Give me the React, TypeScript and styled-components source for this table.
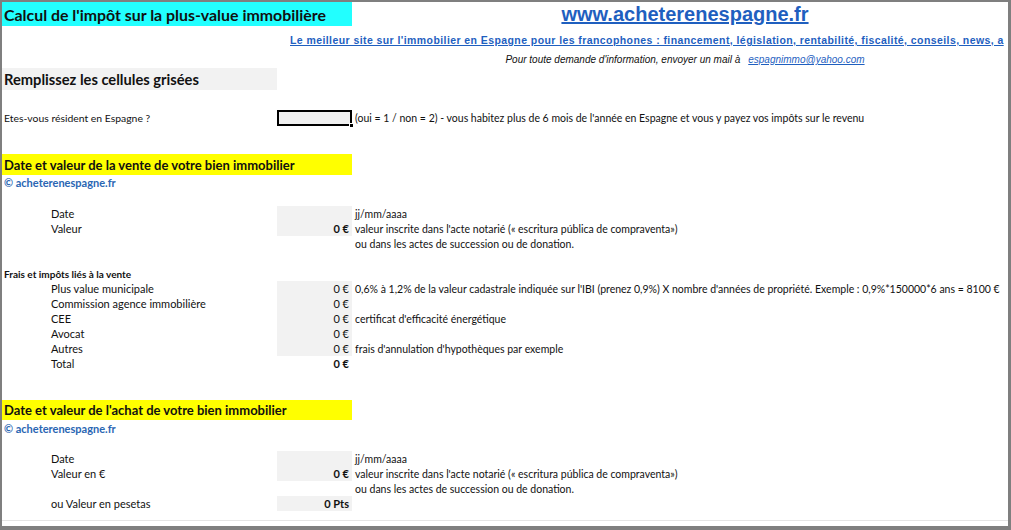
import React from 'react';
import styled, { createGlobalStyle } from 'styled-components';

const GlobalStyle = createGlobalStyle`
  html, body { margin: 0; padding: 0; background: #fff; }
  body { font-family: Lato, "Open Sans", sans-serif; color: #111; }
  * { box-sizing: border-box; }
`;

const Frame = styled.div`
  width: 1011px;
  height: 530px;
  border-style: solid;
  border-color: #7f7f7f;
  border-width: 2px 3px 4px 2px;
  overflow: hidden;
  background: #fff;
  display: flex;
  flex-direction: column;
`;

const Row = styled.div<{ $h: number; $line?: boolean }>`
  height: ${(p) => p.$h}px;
  flex: none;
  display: grid;
  grid-template-columns: 47px 228px 75px 656px;
  align-items: stretch;
  ${(p) => (p.$line ? 'border-bottom: 1px solid #e4e4e4;' : '')}
`;

const Spacer = styled.div<{ $h: number }>`
  height: ${(p) => p.$h}px;
  flex: none;
`;

const TitleBand = styled.div`
  grid-column: 1 / 4;
  background: #22ffff;
  display: flex;
  align-items: center;
  padding-left: 2px;
  font-weight: 700;
  font-size: 15.9px;
  white-space: nowrap;
`;

const SiteLink = styled.a`
  grid-column: 4;
  display: flex;
  align-items: center;
  justify-content: center;
  padding-left: 10px;
  font-family: "Liberation Sans", Arial, sans-serif;
  font-weight: 700;
  font-size: 20px;
  color: #1f5fbf;
  text-decoration: underline;
  white-space: nowrap;
`;

const Tagline = styled.a`
  grid-column: 3 / 5;
  display: flex;
  align-items: center;
  padding-left: 13px;
  font-family: "Liberation Sans", Arial, sans-serif;
  font-weight: 700;
  font-size: 10.5px;
  letter-spacing: 0.42px;
  color: #1f5fbf;
  text-decoration: underline;
  white-space: nowrap;
  overflow: visible;
`;

const Contact = styled.div`
  grid-column: 4;
  display: flex;
  align-items: center;
  justify-content: center;
  padding-left: 10px;
  font-family: "Liberation Sans", Arial, sans-serif;
  font-style: italic;
  font-size: 10px;
  white-space: nowrap;
  gap: 8px;
`;

const Mail = styled.a`
  color: #1f5fbf;
  text-decoration: underline;
`;

const SectionBand = styled.div<{ $bg: string; $span: number }>`
  grid-column: 1 / ${(p) => p.$span};
  background: ${(p) => p.$bg};
  display: flex;
  align-items: center;
  padding-left: 2px;
  font-weight: 700;
  font-size: ${(p) => (p.$span === 3 ? '14.7px' : '13px')};
  white-space: nowrap;
`;

const Copyright = styled.div`
  grid-column: 1 / 3;
  display: flex;
  align-items: center;
  padding-left: 2px;
  font-size: 11px;
  font-weight: 700;
  color: #2a66b3;
  white-space: nowrap;
`;

const SubHeading = styled.div`
  grid-column: 1 / 3;
  display: flex;
  align-items: center;
  padding-left: 2px;
  font-size: 10px;
  font-weight: 700;
  white-space: nowrap;
`;

const Question = styled.div`
  grid-column: 1 / 3;
  display: flex;
  align-items: center;
  padding-left: 2px;
  font-size: 10.4px;
  white-space: nowrap;
`;

const Label = styled.div`
  grid-column: 2;
  display: flex;
  align-items: center;
  padding-left: 2px;
  font-size: 11px;
  white-space: nowrap;
`;

const InputCell = styled.div<{ $filled?: boolean; $bold?: boolean }>`
  grid-column: 3;
  display: flex;
  align-items: center;
  justify-content: flex-end;
  padding-right: 3px;
  background: ${(p) => (p.$filled ? '#f2f2f2' : 'transparent')};
  font-size: 11px;
  font-weight: ${(p) => (p.$bold ? 700 : 400)};
  white-space: nowrap;
`;

const ActiveInput = styled.div`
  grid-column: 3;
  position: relative;
  background: #f0f0f0;
  border: 2px solid #000;
`;

const Handle = styled.span`
  position: absolute;
  right: -4px;
  bottom: -4px;
  width: 5px;
  height: 5px;
  background: #000;
  border: 1px solid #fff;
`;

const Note = styled.div`
  grid-column: 4;
  display: flex;
  align-items: center;
  padding-left: 3px;
  font-size: 10.5px;
  white-space: nowrap;
`;

type Item = { label?: string; value?: string; filled?: boolean; bold?: boolean; note?: string };

const venteMain: Item[] = [
  { label: 'Date', filled: true, note: 'jj/mm/aaaa' },
  { label: 'Valeur', value: '0 €', filled: true, bold: true, note: "valeur inscrite dans l'acte notarié (« escritura pública de compraventa»)" },
  { note: 'ou dans les actes de succession ou de donation.' },
];

const frais: Item[] = [
  { label: 'Plus value municipale', value: '0 €', filled: true, note: "0,6% à 1,2% de la valeur cadastrale indiquée sur l'IBI (prenez 0,9%) X nombre d'années de propriété. Exemple : 0,9%*150000*6 ans = 8100 €" },
  { label: 'Commission agence immobilière', value: '0 €', filled: true },
  { label: 'CEE', value: '0 €', filled: true, note: "certificat d'efficacité énergétique" },
  { label: 'Avocat', value: '0 €', filled: true },
  { label: 'Autres', value: '0 €', filled: true, note: "frais d'annulation d'hypothèques par exemple" },
  { label: 'Total', value: '0 €', bold: true },
];

const achat: Item[] = [
  { label: 'Date', filled: true, note: 'jj/mm/aaaa' },
  { label: 'Valeur en €', value: '0 €', filled: true, bold: true, note: "valeur inscrite dans l'acte notarié (« escritura pública de compraventa»)" },
  { note: 'ou dans les actes de succession ou de donation.' },
  { label: 'ou Valeur en pesetas', value: '0 Pts', filled: true, bold: true },
];

const DataRows = ({ items }: { items: Item[] }) => (
  <>
    {items.map((it, i) => (
      <Row $h={15} key={i}>
        <Label>{it.label}</Label>
        <InputCell $filled={it.filled} $bold={it.bold}>{it.value}</InputCell>
        <Note>{it.note}</Note>
      </Row>
    ))}
  </>
);

export default function App() {
  return (
    <>
      <GlobalStyle />
      <Frame>
        <Row $h={24}>
          <TitleBand>Calcul de l'impôt sur la plus-value immobilière</TitleBand>
          <SiteLink href="#">www.acheterenespagne.fr</SiteLink>
        </Row>
        <Row $h={28}>
          <Tagline href="#">
            Le meilleur site sur l'immobilier en Espagne pour les francophones : financement, législation, rentabilité, fiscalité, conseils, news, a
          </Tagline>
        </Row>
        <Row $h={10}>
          <Contact>
            <span>Pour toute demande d'information, envoyer un mail à</span>
            <Mail href="#">espagnimmo@yahoo.com</Mail>
          </Contact>
        </Row>
        <Spacer $h={4} />
        <Row $h={22}>
          <SectionBand $bg="#f2f2f2" $span={3}>Remplissez les cellules grisées</SectionBand>
        </Row>
        <Spacer $h={20} />
        <Row $h={16}>
          <Question>Etes-vous résident en Espagne ?</Question>
          <ActiveInput>
            <Handle />
          </ActiveInput>
          <Note>(oui = 1 / non = 2) - vous habitez plus de 6 mois de l'année en Espagne et vous y payez vos impôts sur le revenu</Note>
        </Row>
        <Spacer $h={28} />
        <Row $h={21}>
          <SectionBand $bg="#ffff00" $span={4}>Date et valeur de la vente de votre bien immobilier</SectionBand>
        </Row>
        <Row $h={15}>
          <Copyright>© acheterenespagne.fr</Copyright>
        </Row>
        <Spacer $h={16} />
        <DataRows items={venteMain} />
        <Spacer $h={15} />
        <Row $h={15}>
          <SubHeading>Frais et impôts liés à la vente</SubHeading>
        </Row>
        <DataRows items={frais} />
        <Spacer $h={29} />
        <Row $h={20}>
          <SectionBand $bg="#ffff00" $span={4}>Date et valeur de l'achat de votre bien immobilier</SectionBand>
        </Row>
        <Row $h={16}>
          <Copyright>© acheterenespagne.fr</Copyright>
        </Row>
        <Spacer $h={15} />
        <DataRows items={achat} />
        <Row $h={10} $line />
      </Frame>
    </>
  );
}
